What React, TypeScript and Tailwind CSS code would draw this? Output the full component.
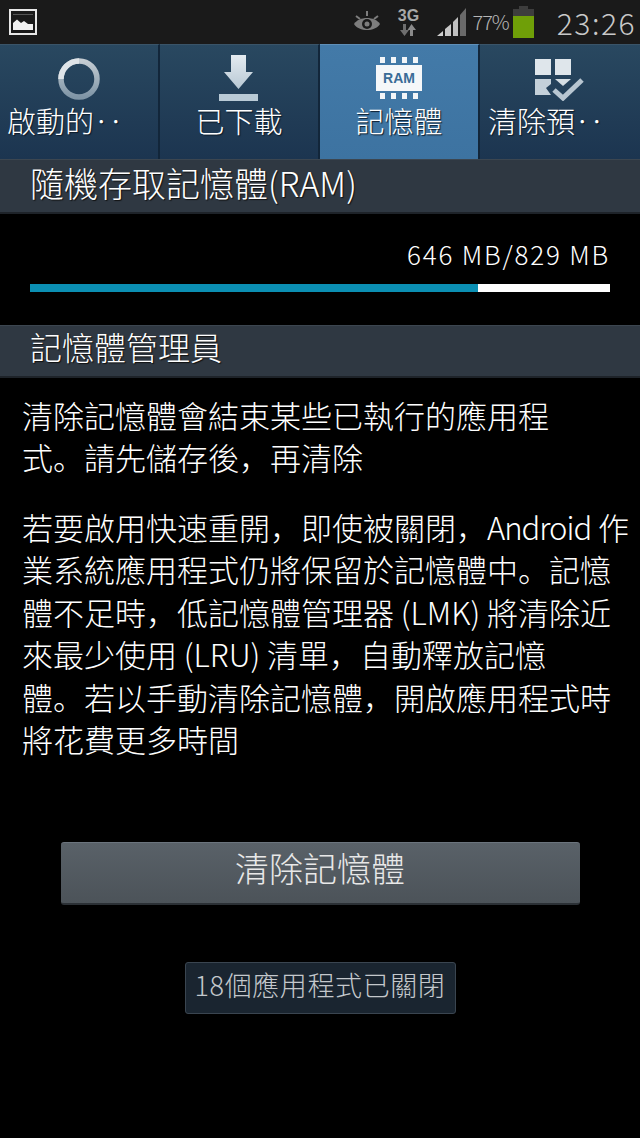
const cjk = "font-['Noto_Sans_CJK_SC','Noto_Sans_CJK_TC',sans-serif]";

const PictureIcon = () => (
  <svg width="28" height="26" viewBox="0 0 28 26">
    <rect x="1" y="1" width="26" height="24" fill="#1a1a1a" stroke="#e8e8e8" strokeWidth="2" />
    <path d="M4 21V14L8 10.500L12 14L15 12L19 15L24 15V21Z" fill="#f2f2f2" />
    <rect x="4" y="5" width="20" height="1" fill="#555" />
  </svg>
);

const EyeIcon = () => (
  <svg width="30" height="24" viewBox="0 0 30 24">
    <path d="M2 14C7 6 23 6 28 14C23 22 7 22 2 14Z" fill="#7d7d7d" />
    <circle cx="15" cy="14" r="5" fill="#1a1a1a" />
    <circle cx="15" cy="14" r="2.500" fill="#7d7d7d" />
    <path d="M4 6L8 9M15 1V6M26 6L22 9" stroke="#7d7d7d" strokeWidth="2" />
  </svg>
);

const NetworkIcon = () => (
  <div className="flex w-[24px] flex-col items-center">
    <span className="font-['Liberation_Sans',sans-serif] text-[16px] leading-[15px] font-bold text-[#a8a8a8]">3G</span>
    <svg width="20" height="14" viewBox="0 0 20 14">
      <path d="M5 1H8V7H11L6.500 13L2 7H5Z" fill="#6e6e6e" />
      <path d="M12 13H15V7H18L13.500 1L9.500 7H12Z" fill="#8a8a8a" />
    </svg>
  </div>
);

const SignalIcon = () => (
  <svg width="30" height="30" viewBox="0 0 30 30">
    <path d="M0 29L6 24V29Z" fill="#d0d0d0" />
    <path d="M8 22L14 17V29H8Z" fill="#c8c8c8" />
    <path d="M16 15L21 10V29H16Z" fill="#c0c0c0" />
    <path d="M23 8L29 1V29H23Z" fill="#6a6a6a" />
  </svg>
);

const BatteryIcon = () => (
  <div className="flex h-[32px] w-[21px] flex-col items-center">
    <div className="h-[3px] w-[9px] bg-[#3d3d3d]" />
    <div className="h-[7px] w-full bg-[#3d3d3d]" />
    <div className="h-[22px] w-full bg-[#6f9f08]" />
  </div>
);

const RingIcon = () => (
  <svg width="42" height="42" viewBox="0 0 42 42">
    <defs>
      <linearGradient id="ring" x1="0" y1="0" x2="0" y2="1">
        <stop offset="0" stopColor="#c4ccd2" />
        <stop offset="1" stopColor="#7f95a6" />
      </linearGradient>
    </defs>
    <circle cx="21" cy="21" r="18" fill="none" stroke="url(#ring)" strokeWidth="5.500" />
    <path d="M21 3A18 18 0 0 0 3 21" fill="none" stroke="#dfe4e8" strokeWidth="5.500" />
  </svg>
);

const DownloadIcon = () => (
  <svg width="42" height="48" viewBox="0 0 42 48">
    <defs>
      <linearGradient id="dl" x1="0" y1="0" x2="0" y2="1">
        <stop offset="0" stopColor="#e4ebf0" />
        <stop offset="1" stopColor="#b8c8d4" />
      </linearGradient>
    </defs>
    <path d="M13 0H28V17H35L20.500 34L6 17H13Z" fill="url(#dl)" />
    <rect x="1" y="39" width="39" height="7" fill="#b9cad6" />
  </svg>
);

const RamIcon = () => (
  <svg width="46" height="42" viewBox="0 0 46 42">
    <path d="M4 0H9V6H4ZM15 0H20V6H15ZM26 0H31V6H26ZM37 0H42V6H37ZM4 36H9V42H4ZM15 36H20V42H15ZM26 36H31V42H26ZM37 36H42V42H37Z" fill="#f2f5f8" />
    <rect x="0" y="8" width="46" height="26" fill="#f5f7f9" />
    <text x="23" y="26" textAnchor="middle" fontFamily="Liberation Sans, sans-serif" fontWeight="700" fontSize="14" fill="#3a6c97">RAM</text>
  </svg>
);

const ChecklistIcon = () => (
  <svg width="50" height="42" viewBox="0 0 50 42">
    <rect x="0" y="0" width="16" height="16" fill="#dfe6eb" />
    <rect x="20" y="0" width="16" height="16" fill="#dfe6eb" />
    <path d="M0 20H16V25L11 29L16 36H0Z" fill="#c4d0d9" />
    <path d="M20 20H36L28 27Z" fill="#d5dee4" />
    <path d="M19 31L28 39L47 21" fill="none" stroke="#b8c6d1" strokeWidth="5" />
  </svg>
);

const tabs = [
  { label: "啟動的‥", icon: <RingIcon />, iconClass: "pt-[13px]", labelClass: "pr-[28px]" },
  { label: "已下載", icon: <DownloadIcon />, iconClass: "pt-[10px]", labelClass: "" },
  { label: "記憶體", icon: <RamIcon />, iconClass: "pt-[12px]", labelClass: "", active: true },
  { label: "清除預‥", icon: <ChecklistIcon />, iconClass: "pt-[14px]", labelClass: "pr-[28px]" },
];

const SectionHeader = ({ title, big }: { title: string; big?: boolean }) => (
  <div
    className={`flex items-center border-t border-t-[#3c4650] border-b-2 border-b-[#1e2329] bg-[#2f3842] pl-[30px] text-white [text-shadow:1px_1px_1px_#111] ${
      big ? "h-[55px] pb-[8px] text-[34px] font-light" : "h-[53px] pb-[11px] text-[32px] font-light"
    }`}
  >
    {title}
  </div>
);

export default function App() {
  return (
    <div className={`flex min-h-[1138px] w-[640px] flex-col overflow-hidden bg-black text-white ${cjk}`}>
      <div className="flex h-[44px] items-center bg-[#1a1a1a] pr-[4px] pl-[9px]">
        <PictureIcon />
        <div className="ml-auto flex items-center">
          <EyeIcon />
          <div className="ml-[14px]"><NetworkIcon /></div>
          <div className="ml-[17px]"><SignalIcon /></div>
          <span className="ml-[5px] text-[20px] leading-[20px] font-light tracking-[-1px] text-[#b5b5b5]">77%</span>
          <div className="ml-[4px]"><BatteryIcon /></div>
          <span className="ml-[23px] text-[30px] leading-none font-light tracking-[1.500px] text-[#c9c9c9]">23:26</span>
        </div>
      </div>

      <div className="grid h-[115px] grid-cols-4">
        {tabs.map((tab) => (
          <div
            key={tab.label}
            className={`flex flex-col items-center border-t border-r-2 border-r-[#12263a] last:border-r-0 ${
              tab.active
                ? "border-t-[#5f8fb8] bg-gradient-to-b from-[#437aa8] to-[#3d73a1]"
                : "border-t-[#3a5468] bg-gradient-to-b from-[#294860] to-[#1c3550]"
            }`}
          >
            <div className={`flex h-[56px] w-full items-start justify-center ${tab.iconClass}`}>{tab.icon}</div>
            <span className={`text-[29px] leading-[38px] font-light whitespace-nowrap [text-shadow:1px_1px_1px_#0c1a28] ${tab.labelClass}`}>
              {tab.label}
            </span>
          </div>
        ))}
      </div>

      <SectionHeader title="隨機存取記憶體(RAM)" big />

      <div className="px-[30px] pt-[23px] pb-[33px]">
        <p className="text-right text-[26px] leading-[34px] font-light tracking-[1.800px]">646 MB/829 MB</p>
        <div className="mt-[13px] flex h-[8px] bg-white">
          <div className="h-full w-[77.2%] bg-[#0b8fb3]" />
        </div>
      </div>

      <SectionHeader title="記憶體管理員" />

      <div className="pt-[16px] pl-[22px] text-[31px] font-light">
        <p className="leading-[42px]">
          清除記憶體會結束某些已執行的應用程
          <br />
          式。請先儲存後，再清除
        </p>
        <p className="mt-[28px] leading-[42.400px] whitespace-nowrap">
          若要啟用快速重開，即使被關閉，<span className="tracking-[-1px]">Android</span> 作
          <br />
          業系統應用程式仍將保留於記憶體中。記憶
          <br />
          體不足時，低記憶體管理器 (LMK) 將清除近
          <br />
          來最少使用 (LRU) 清單，自動釋放記憶
          <br />
          體。若以手動清除記憶體，開啟應用程式時
          <br />
          將花費更多時間
        </p>
      </div>

      <button className="mx-auto mt-[82px] flex h-[63px] w-[519px] items-center justify-center rounded-[3px] border-t border-t-[#6b747d] border-b-2 border-b-[#2b3035] bg-gradient-to-b from-[#596168] to-[#4c5359] pb-[12px] text-[34px] font-light text-[#e8e8e8]">
        清除記憶體
      </button>

      <div className="mx-auto mt-[57px] flex h-[52px] w-[271px] items-center justify-center rounded-[3px] border border-[#3a4550] bg-[#1a2530] pb-[6px] text-[27px] font-light tracking-[0.600px] text-[#c4c8cc]">
        18個應用程式已關閉
      </div>
    </div>
  );
}
